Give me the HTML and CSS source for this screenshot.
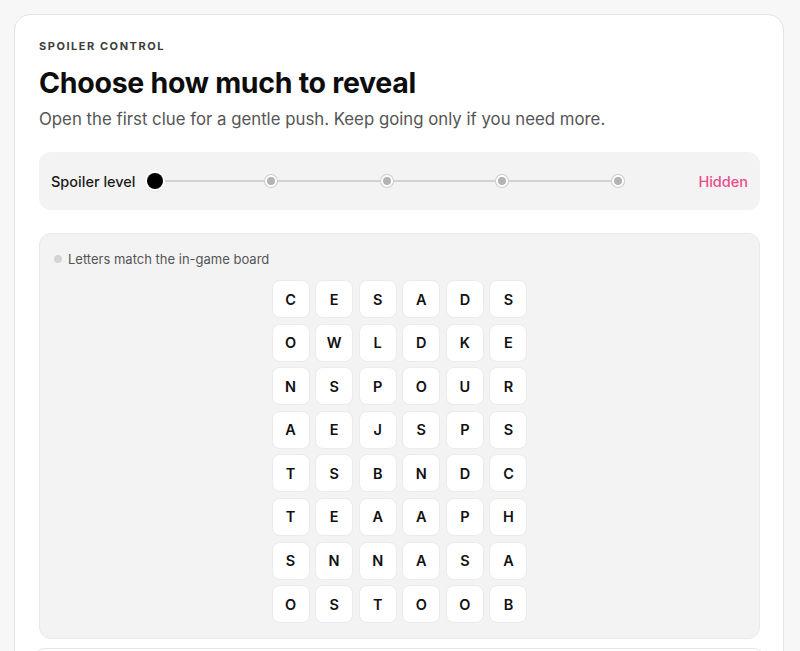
FILE: index.html
```html
<!DOCTYPE html>
<html lang="en">
<head>
    <meta charset="UTF-8">
    <meta name="viewport" content="width=device-width, initial-scale=1.0">
    <title>Spoiler Control</title>
    <link rel="stylesheet" href="styles.css">
</head>
<body>
    <div class="card">
        <p class="eyebrow">Spoiler control</p>
        <h1>Choose how much to reveal</h1>
        <p class="lead">Open the first clue for a gentle push. Keep going only if you need more.</p>

        <div class="level-bar">
            <span class="level-label">Spoiler level</span>
            <div class="slider" role="slider" aria-valuemin="0" aria-valuemax="4" aria-valuenow="0">
                <span class="knob"></span>
                <span class="step current"></span>
                <span class="step"></span>
                <span class="step"></span>
                <span class="step"></span>
                <span class="step"></span>
            </div>
            <span class="level-value">Hidden</span>
        </div>

        <div class="board-panel">
            <p class="board-note"><span class="note-dot"></span>Letters match the in-game board</p>
            <div class="board">
                <span>C</span><span>E</span><span>S</span><span>A</span><span>D</span><span>S</span>
                <span>O</span><span>W</span><span>L</span><span>D</span><span>K</span><span>E</span>
                <span>N</span><span>S</span><span>P</span><span>O</span><span>U</span><span>R</span>
                <span>A</span><span>E</span><span>J</span><span>S</span><span>P</span><span>S</span>
                <span>T</span><span>S</span><span>B</span><span>N</span><span>D</span><span>C</span>
                <span>T</span><span>E</span><span>A</span><span>A</span><span>P</span><span>H</span>
                <span>S</span><span>N</span><span>N</span><span>A</span><span>S</span><span>A</span>
                <span>O</span><span>S</span><span>T</span><span>O</span><span>O</span><span>B</span>
            </div>
        </div>

        <div class="next-panel"></div>
    </div>
</body>
</html>
```

FILE: styles.css
```css
body {
    margin: 0;
    padding: 14px 16px 0 14px;
    background: #f7f7f7;
    font-family: Inter, "Noto Sans", sans-serif;
    color: #111;
}

.card {
    background: #fff;
    border: 1px solid #e4e4e4;
    border-radius: 16px;
    padding: 24px 23px 0 24px;
    min-height: 700px;
}

.eyebrow {
    margin: 0;
    font-size: 11px;
    line-height: 14px;
    font-weight: 700;
    letter-spacing: 0.14em;
    text-transform: uppercase;
    color: #3c3c3c;
}

h1 {
    margin: 12px 0 0;
    font-size: 28.5px;
    line-height: 36px;
    font-weight: 700;
    letter-spacing: -0.01em;
    color: #0d0d0d;
}

.lead {
    margin: 6px 0 0;
    font-size: 16.8px;
    line-height: 24px;
    color: #555;
}

/* slider row */
.level-bar {
    margin-top: 21px;
    height: 58px;
    background: #f3f3f3;
    border-radius: 12px;
    display: flex;
    align-items: center;
    padding: 0 12px;
}

.level-label {
    font-size: 14.5px;
    font-weight: 500;
    color: #1a1a1a;
    width: 104px;
}

.slider {
    position: relative;
    width: 475px;
    margin-left: -6px;
    height: 18px;
    display: flex;
    justify-content: space-between;
    align-items: center;
}

.slider::before {
    content: "";
    position: absolute;
    left: 6px;
    right: 6px;
    top: 8px;
    height: 2px;
    background: #d3d2cd;
}

.slider .step {
    position: relative;
    width: 8px;
    height: 8px;
    border-radius: 50%;
    background: #b3b3b3;
    border: 2px solid #fff;
    box-shadow: 0 0 0 1px #cdcdcd;
}

.slider .step.current {
    visibility: hidden;
}

.slider .knob {
    position: absolute;
    left: -2px;
    top: 1px;
    width: 16px;
    height: 16px;
    border-radius: 50%;
    background: #000;
    box-shadow: 0 0 0 2px #fff, 0 1px 3px rgb(0 0 0 / 0.25);
    z-index: 1;
}

.level-value {
    margin-left: auto;
    font-size: 14.5px;
    font-weight: 500;
    color: #ec4b8c;
}

/* letter board */
.board-panel {
    margin-top: 23px;
    background: #f3f3f3;
    border: 1px solid #e9e9e9;
    border-radius: 12px;
    padding: 16px 14px 15px;
}

.board-note {
    margin: 0 0 12px;
    display: flex;
    align-items: center;
    gap: 6px;
    font-size: 13px;
    line-height: 18px;
    color: #555;
}

.note-dot {
    width: 8px;
    height: 8px;
    border-radius: 50%;
    background: #d4d4d4;
}

.board {
    display: grid;
    grid-template-columns: repeat(6, 38px);
    grid-auto-rows: 38px;
    gap: 5.6px;
    justify-content: center;
}

.board span {
    display: flex;
    align-items: center;
    justify-content: center;
    background: #fff;
    border: 1px solid #ebebeb;
    border-radius: 8px;
    font-size: 14.5px;
    font-weight: 600;
    color: #111;
}

.next-panel {
    margin: 9px -6px 0;
    height: 60px;
    border: 1px solid #e6e6e6;
    border-radius: 12px;
    background: #fff;
}
```
